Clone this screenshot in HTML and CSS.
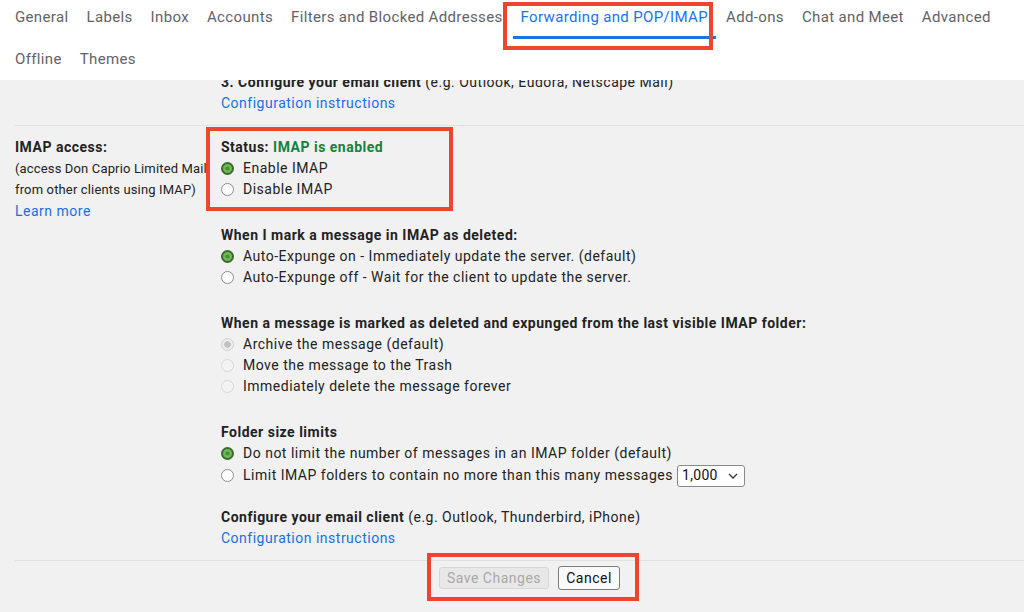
FILE: index.html
```html
<!DOCTYPE html>
<html lang="en">
<head>
<meta charset="utf-8">
<title>Settings - Forwarding and POP/IMAP</title>
<link rel="stylesheet" href="styles.css">
</head>
<body>
<div class="page">
  <header class="tabs">
    <nav class="tab-list">
      <a class="tab">General</a>
      <a class="tab">Labels</a>
      <a class="tab">Inbox</a>
      <a class="tab">Accounts</a>
      <a class="tab">Filters and Blocked Addresses</a>
      <a class="tab active">Forwarding and POP/IMAP</a>
      <a class="tab">Add-ons</a>
      <a class="tab">Chat and Meet</a>
      <a class="tab">Advanced</a>
      <a class="tab">Offline</a>
      <a class="tab">Themes</a>
    </nav>
  </header>

  <main class="settings">
    <div class="scroll">
      <section class="row">
        <div class="label"></div>
        <div class="value">
          <div class="line"><b>3. Configure your email client</b> (e.g. Outlook, Eudora, Netscape Mail)</div>
          <a class="link">Configuration instructions</a>
        </div>
      </section>

      <section class="row">
        <div class="label">
          <div class="label-title">IMAP access:</div>
          <div class="label-note">(access Don Caprio Limited Mail</div>
          <div class="label-note">from other clients using IMAP)</div>
          <a class="link link-learn">Learn more</a>
        </div>
        <div class="value">
          <div class="group">
            <div class="group-title">Status: <span class="status-on">IMAP is enabled</span></div>
            <label class="option"><input class="radio" type="radio" name="imap" checked><span>Enable IMAP</span></label>
            <label class="option"><input class="radio" type="radio" name="imap"><span>Disable IMAP</span></label>
          </div>

          <div class="group">
            <div class="group-title">When I mark a message in IMAP as deleted:</div>
            <label class="option"><input class="radio" type="radio" name="expunge" checked><span>Auto-Expunge on - Immediately update the server. (default)</span></label>
            <label class="option"><input class="radio" type="radio" name="expunge"><span>Auto-Expunge off - Wait for the client to update the server.</span></label>
          </div>

          <div class="group">
            <div class="group-title">When a message is marked as deleted and expunged from the last visible IMAP folder:</div>
            <label class="option"><input class="radio" type="radio" name="expunged" checked disabled><span>Archive the message (default)</span></label>
            <label class="option"><input class="radio" type="radio" name="expunged" disabled><span>Move the message to the Trash</span></label>
            <label class="option"><input class="radio" type="radio" name="expunged" disabled><span>Immediately delete the message forever</span></label>
          </div>

          <div class="group">
            <div class="group-title">Folder size limits</div>
            <label class="option"><input class="radio" type="radio" name="limit" checked><span>Do not limit the number of messages in an IMAP folder (default)</span></label>
            <label class="option option-select"><input class="radio" type="radio" name="limit"><span>Limit IMAP folders to contain no more than this many messages</span>
              <span class="select"><span>1,000</span>
                <svg class="chevron" width="10" height="6" viewBox="0 0 10 6"><path d="M1 1l4 4 4-4" fill="none" stroke="#333" stroke-width="1.3"/></svg>
              </span>
            </label>
          </div>

          <div class="group group-client">
            <div class="line"><b>Configure your email client</b> (e.g. Outlook, Thunderbird, iPhone)</div>
            <a class="link">Configuration instructions</a>
          </div>
        </div>
      </section>
    </div>

    <div class="actions">
      <button class="btn btn-save" disabled>Save Changes</button>
      <button class="btn btn-cancel">Cancel</button>
    </div>
  </main>

  <div class="callout callout-tab"></div>
  <div class="callout callout-status"></div>
  <div class="callout callout-actions"></div>
</div>
</body>
</html>
```

FILE: styles.css
```css
* { box-sizing: border-box; }

html, body {
  margin: 0;
  padding: 0;
}

body {
  font-family: Roboto, "Liberation Sans", Arial, sans-serif;
  color: #222;
  background: #f1f1f1;
  width: 1024px;
  height: 612px;
  overflow: hidden;
}

.page {
  position: relative;
  height: 612px;
}

/* ---------- Tabs ---------- */
.tabs {
  background: #fff;
  height: 80px;
  overflow: hidden;
  padding-left: 7px;
}

.tab-list {
  display: flex;
  flex-wrap: wrap;
  column-gap: 2px;
}

.tab {
  font-size: 15px;
  line-height: 20px;
  letter-spacing: 0.35px;
  color: #5f6368;
  padding: 7px 8px 9px;
  border-bottom: 3px solid transparent;
  margin-bottom: 3px;
  text-decoration: none;
  white-space: nowrap;
}

.tab.active {
  color: #1a73e8;
  border-bottom-color: #1a73e8;
}

/* ---------- Settings ---------- */
.settings {
  height: 532px;
  overflow: hidden;
}

.scroll {
  margin-top: -19px;
}

.row {
  display: grid;
  grid-template-columns: 206px 1fr;
  margin-left: 15px;
  padding: 11px 0 11px;
  border-bottom: 1px solid #e1e1e1;
  font-size: 14px;
  line-height: 21px;
  letter-spacing: 0.5px;
}

.line b { font-weight: 700; }

.link {
  display: block;
  color: #1a6fe0;
  font-size: 14px;
  line-height: 21px;
  text-decoration: none;
}

.label {
  overflow: hidden;
  white-space: nowrap;
}

.label-title {
  font-weight: 700;
}

.label-note {
  font-size: 13px;
  letter-spacing: 0.15px;
}

.link-learn {
  line-height: 22px;
}

.group + .group {
  margin-top: 25px;
}

.group.group-client {
  margin-top: 20px;
}

.group-title {
  font-weight: 700;
}

.status-on {
  color: #188038;
}

.option {
  display: flex;
  align-items: center;
  gap: 9px;
  height: 21px;
  white-space: nowrap;
}

.option-select {
  height: 23px;
}

/* radios */
.radio {
  appearance: none;
  -webkit-appearance: none;
  margin: 0;
  width: 13px;
  height: 13px;
  border-radius: 50%;
  border: 1px solid #8c8c8c;
  background: #fff;
  flex: none;
}

.radio:checked {
  border: 2px solid #3d6a33;
  background: radial-gradient(circle, #4f8a3e 0 1.5px, #6cbd50 2.5px);
}

.radio:disabled {
  border: 1px solid #d6d6d6;
  background: #f3f3f3;
}

.radio:disabled:checked {
  border: 1px solid #d0d0d0;
  background: radial-gradient(circle, #c2c2c2 0 3px, #ececec 3.6px);
}

/* select */
.select {
  display: inline-flex;
  align-items: center;
  justify-content: space-between;
  width: 68px;
  height: 22px;
  margin-left: -5px;
  padding: 0 6px 0 4px;
  background: #fff;
  border: 1px solid #8a8a8a;
  border-radius: 3px;
  font-size: 14px;
  letter-spacing: 0.3px;
  color: #111;
}

.chevron { display: block; }

/* actions */
.actions {
  display: flex;
  align-items: center;
  justify-content: center;
  gap: 9px;
  padding: 5px 0 0 35px;
}

.btn {
  font-family: Roboto, "Liberation Sans", Arial, sans-serif;
  font-size: 14px;
  letter-spacing: 0.5px;
  height: 24px;
  padding: 0;
  border-radius: 3px;
}

.btn-save {
  width: 110px;
  height: 22px;
  border: 1px solid #d7d7d7;
  background: #e8e8e8;
  color: #a9a9a9;
}

.btn-cancel {
  width: 62px;
  border: 1px solid #7c7c7c;
  background: #fafafa;
  color: #111;
}

/* annotation callouts */
.callout {
  position: absolute;
  border: 4px solid #ee4430;
  pointer-events: none;
}

.callout-tab {
  left: 503px;
  top: 2px;
  width: 210px;
  height: 48px;
}

.callout-status {
  left: 206px;
  top: 127px;
  width: 247px;
  height: 84px;
}

.callout-actions {
  left: 427px;
  top: 553px;
  width: 212px;
  height: 48px;
}
```
